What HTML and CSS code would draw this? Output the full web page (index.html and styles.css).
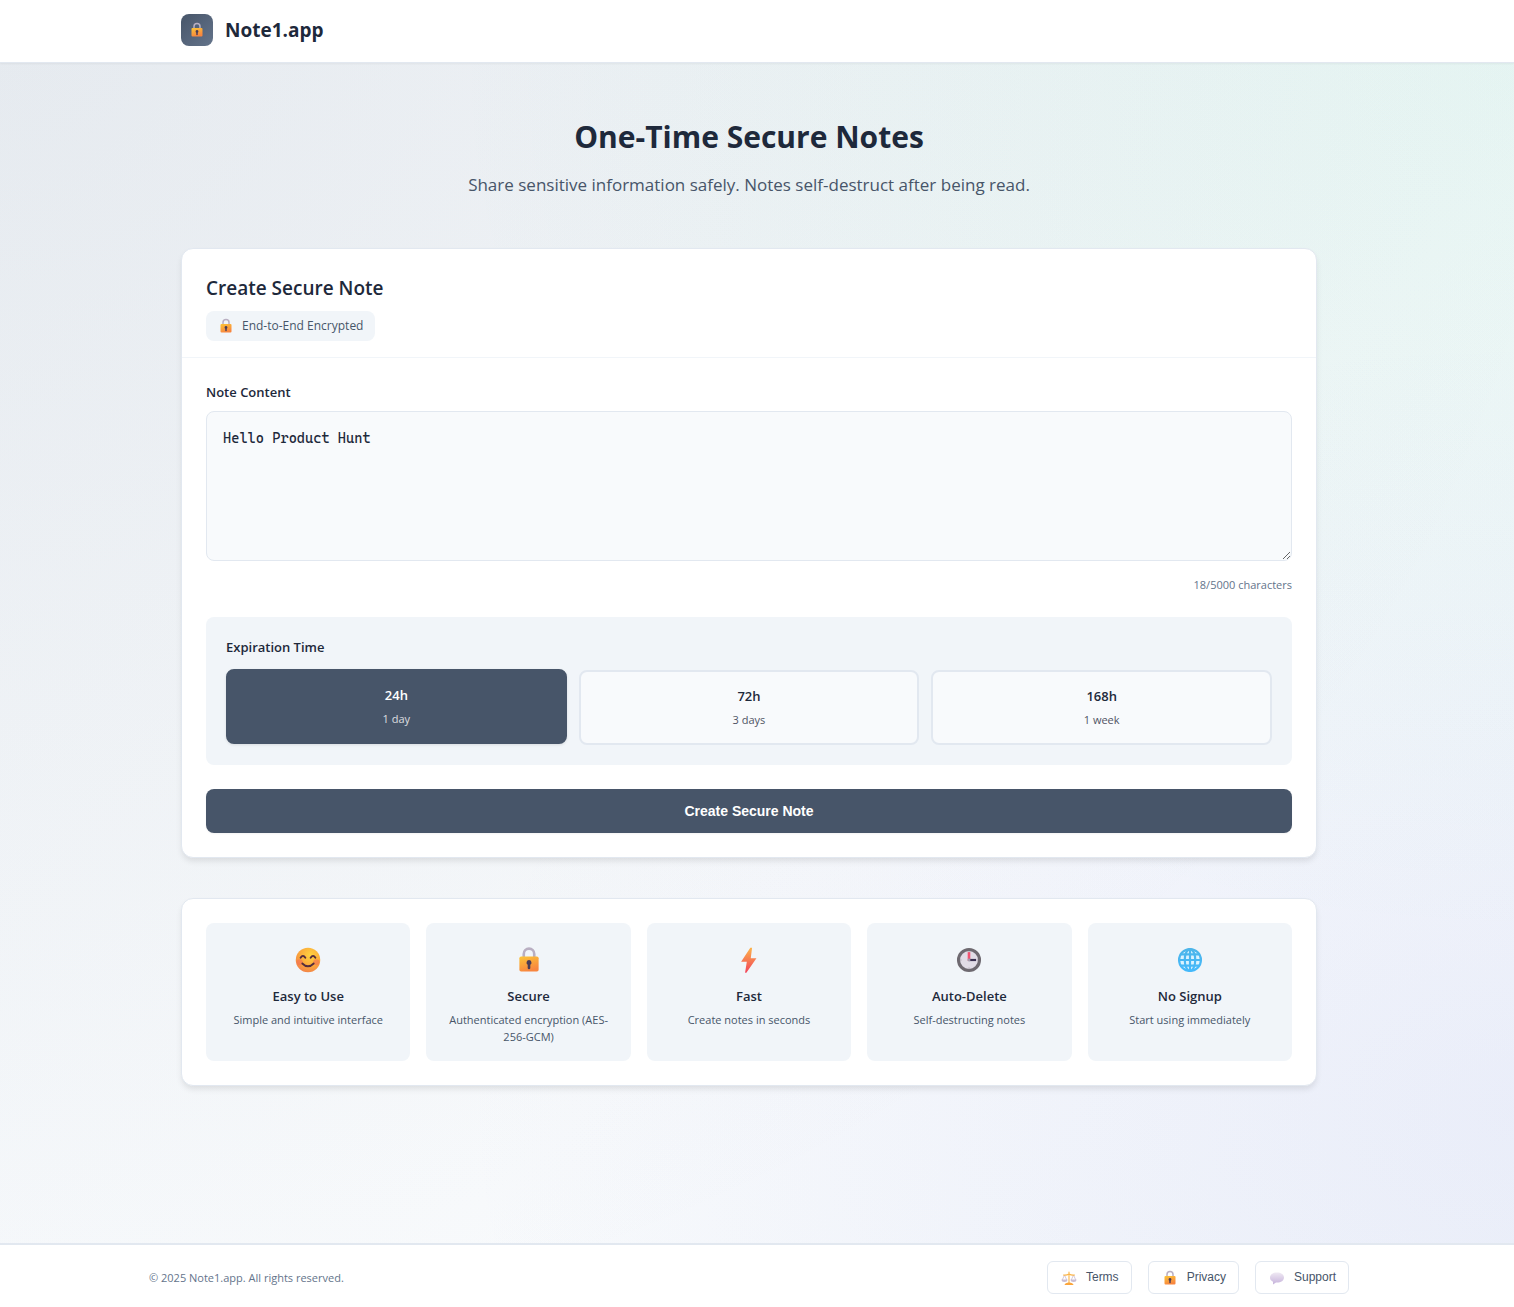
FILE: index.html
```html
<!doctype html>
<html lang="en">
<head>
  <meta charset="utf-8">
  <meta name="viewport" content="width=device-width, initial-scale=1">
  <title>Note1.app</title>
  <link rel="stylesheet" href="styles.css">
</head>
<body>
<!-- shared icons -->
<svg class="icon-defs" aria-hidden="true">
  <defs>
    <linearGradient id="gold" x1="0" y1="0" x2="0.4" y2="1">
      <stop offset="0" stop-color="#fcc537"/>
      <stop offset="1" stop-color="#f8863f"/>
    </linearGradient>
    <radialGradient id="face" cx="0.6" cy="0.3" r="0.8">
      <stop offset="0" stop-color="#ffd340"/>
      <stop offset="0.55" stop-color="#fba93b"/>
      <stop offset="1" stop-color="#f07a4c"/>
    </radialGradient>
    <linearGradient id="flame" x1="0" y1="0" x2="0" y2="1">
      <stop offset="0" stop-color="#fcb44a"/>
      <stop offset="1" stop-color="#f2435a"/>
    </linearGradient>
    <linearGradient id="sky" x1="0" y1="0" x2="0" y2="1">
      <stop offset="0" stop-color="#4db5e9"/>
      <stop offset="1" stop-color="#45b9fb"/>
    </linearGradient>
    <linearGradient id="bubble" x1="0" y1="0" x2="0" y2="1">
      <stop offset="0" stop-color="#efe9f3"/>
      <stop offset="1" stop-color="#c6b2db"/>
    </linearGradient>
  </defs>
  <symbol id="icon-lock" viewBox="0 0 32 32">
    <path d="M10 14V9a6 6 0 0 1 12 0v5" fill="none" stroke="#b9afc2" stroke-width="3"/>
    <rect x="5" y="12" width="22" height="17" rx="2" fill="url(#gold)"/>
    <path d="M16 16a3 3 0 0 0-1.500 5.500v3.500a1.500 1.500 0 0 0 3 0v-3.500A3 3 0 0 0 16 16z" fill="#493b55"/>
  </symbol>
  <symbol id="icon-smile" viewBox="0 0 32 32">
    <circle cx="16" cy="16" r="14" fill="url(#face)"/>
    <circle cx="6.500" cy="18.500" r="3.500" fill="#f36b5a" opacity=".55"/>
    <circle cx="25.500" cy="18.500" r="3.500" fill="#f36b5a" opacity=".55"/>
    <path d="M7.500 13.500q2.700-4.500 5.500 0M19 13.500q2.700-4.500 5.500 0M9.500 20q6.500 6.500 13 0" fill="none" stroke="#542c3d" stroke-width="2.100" stroke-linecap="round"/>
  </symbol>
  <symbol id="icon-bolt" viewBox="0 0 32 32">
    <path d="M17.500 2 7 18h6.500L11.500 30.500h1.500L24.500 14h-6.500L19.500 2z" fill="url(#flame)"/>
  </symbol>
  <symbol id="icon-clock" viewBox="0 0 32 32">
    <circle cx="16" cy="16" r="12" fill="#e1dce6" stroke="#6e6970" stroke-width="3.500"/>
    <path d="M16 5.500v2M16 24.500v2M5.500 16h2M24.500 16h2" stroke="#aaa2b0" stroke-width="1"/>
    <path d="M16 17V7" stroke="#f25371" stroke-width="3"/>
    <path d="M16 16h8" stroke="#3a3050" stroke-width="2.500"/>
    <circle cx="16" cy="16" r="1.700" fill="#a49cad"/>
  </symbol>
  <symbol id="icon-globe" viewBox="0 0 32 32">
    <circle cx="16" cy="16" r="12.500" fill="#dcf3ff"/>
    <g fill="none" stroke="url(#sky)" stroke-width="2.500">
      <circle cx="16" cy="16" r="12.500"/>
      <ellipse cx="16" cy="16" rx="6" ry="12.500"/>
      <path d="M16 3l.01 26M3 16l26 .01M5 9.500l22 .01M5 22.500l22 .01"/>
    </g>
  </symbol>
  <symbol id="icon-scales" viewBox="0 0 32 32">
    <path d="M7 10 2.500 20M7 10l4.500 10M25 10l-4.500 10M25 10l4.500 10" fill="none" stroke="#c5b6cf" stroke-width="1.500"/>
    <path d="M5 10q6 1 11-2 5 3 11 2M16 4v22" fill="none" stroke="#fbb548" stroke-width="2.200" stroke-linecap="round"/>
    <path d="M1 19h12a6 5 0 0 1-12 0zM19 19h12a6 5 0 0 1-12 0z" fill="#c9bdd3"/>
    <path d="M7 30q1-5 9-5t9 5z" fill="#fba53b"/>
  </symbol>
  <symbol id="icon-chat" viewBox="0 0 32 32">
    <path d="M16 5C8 5 2 9 2 15c0 4 2.500 7 6 8.500V29l6-4h2c8 0 14-4 14-10S24 5 16 5z" fill="url(#bubble)"/>
  </symbol>
</svg>

<header class="site-header">
  <div class="header-content">
    <a class="logo" href="/">
      <span class="logo-icon"><svg class="icon-sm" aria-hidden="true"><use href="#icon-lock"/></svg></span>
      <span>Note1.app</span>
    </a>
  </div>
</header>

<main class="main">
  <section class="hero">
    <h1 class="hero-title">One-Time Secure Notes</h1>
    <p class="hero-subtitle">Share sensitive information safely. Notes self-destruct after being read.</p>
  </section>

  <section class="card">
    <div class="card-header">
      <h2 class="card-title">Create Secure Note</h2>
      <div class="badge">
        <svg class="icon-sm" aria-hidden="true"><use href="#icon-lock"/></svg>
        <span>End-to-End Encrypted</span>
      </div>
    </div>
    <form class="card-body">
      <label class="form-label" for="note">Note Content</label>
      <textarea class="note-input" id="note" maxlength="5000" spellcheck="false">Hello Product Hunt</textarea>
      <div class="char-count"><span id="count">18</span>/5000 characters</div>

      <div class="expiration" role="group" aria-labelledby="expiration-label">
        <div class="form-label" id="expiration-label">Expiration Time</div>
        <div class="expiration-options">
          <button class="option active" type="button" aria-pressed="true">
            <span class="option-time">24h</span>
            <span class="option-desc">1 day</span>
          </button>
          <button class="option" type="button" aria-pressed="false">
            <span class="option-time">72h</span>
            <span class="option-desc">3 days</span>
          </button>
          <button class="option" type="button" aria-pressed="false">
            <span class="option-time">168h</span>
            <span class="option-desc">1 week</span>
          </button>
        </div>
      </div>

      <button class="submit" type="button">Create Secure Note</button>
    </form>
  </section>

  <section class="card features">
    <div class="feature">
      <div class="feature-icon"><svg aria-hidden="true"><use href="#icon-smile"/></svg></div>
      <h3 class="feature-title">Easy to Use</h3>
      <p class="feature-text">Simple and intuitive interface</p>
    </div>
    <div class="feature">
      <div class="feature-icon"><svg aria-hidden="true"><use href="#icon-lock"/></svg></div>
      <h3 class="feature-title">Secure</h3>
      <p class="feature-text">Authenticated encryption (AES-256-GCM)</p>
    </div>
    <div class="feature">
      <div class="feature-icon"><svg aria-hidden="true"><use href="#icon-bolt"/></svg></div>
      <h3 class="feature-title">Fast</h3>
      <p class="feature-text">Create notes in seconds</p>
    </div>
    <div class="feature">
      <div class="feature-icon"><svg aria-hidden="true"><use href="#icon-clock"/></svg></div>
      <h3 class="feature-title">Auto-Delete</h3>
      <p class="feature-text">Self-destructing notes</p>
    </div>
    <div class="feature">
      <div class="feature-icon"><svg aria-hidden="true"><use href="#icon-globe"/></svg></div>
      <h3 class="feature-title">No Signup</h3>
      <p class="feature-text">Start using immediately</p>
    </div>
  </section>
</main>

<footer class="site-footer">
  <div class="footer-content">
    <p class="copyright">© 2025 Note1.app. All rights reserved.</p>
    <nav class="footer-links">
      <button class="footer-button" type="button"><svg aria-hidden="true"><use href="#icon-scales"/></svg>Terms</button>
      <button class="footer-button" type="button"><svg aria-hidden="true"><use href="#icon-lock"/></svg>Privacy</button>
      <button class="footer-button" type="button"><svg aria-hidden="true"><use href="#icon-chat"/></svg>Support</button>
    </nav>
  </div>
</footer>

<script>
  var note = document.getElementById('note');
  note.addEventListener('input', function () {
    document.getElementById('count').textContent = note.value.length;
  });

  var options = document.querySelectorAll('.option');
  options.forEach(function (option) {
    option.addEventListener('click', function () {
      options.forEach(function (other) {
        other.classList.toggle('active', other === option);
        other.setAttribute('aria-pressed', other === option);
      });
    });
  });
</script>
</body>
</html>
```

FILE: styles.css
```css
* {
  box-sizing: border-box;
  margin: 0;
  padding: 0;
}
body {
  background:
    radial-gradient(ellipse at 0% 0%, rgba(71, 85, 105, .07) 0%, transparent 75%),
    radial-gradient(ellipse at 100% 5%, rgba(16, 185, 129, .08) 0%, transparent 50%),
    radial-gradient(ellipse at 100% 85%, rgba(99, 102, 241, .06) 0%, transparent 50%),
    linear-gradient(135deg, #f1f5f9 0%, #f8fafc 60%, #f1f5f9 100%);
  color: #1e293b;
  display: flex;
  flex-direction: column;
  font-family: "Segoe UI", "Open Sans", sans-serif;
  min-height: 100vh;
}
.icon-defs {
  height: 0;
  position: absolute;
  width: 0;
}
.icon-sm {
  flex: none;
  height: 16px;
  width: 16px;
}

.site-header,
.main,
.site-footer {
  padding-right: 16px;
}

/* header */
.site-header {
  background: #fff;
  border-bottom: 1px solid #e2e8f0;
  box-shadow: 0 1px 2px rgba(0, 0, 0, .05);
}
.header-content {
  margin: 0 auto;
  max-width: 1200px;
  padding: 14px 32px 16px;
}
.logo {
  align-items: center;
  color: #1e293b;
  display: inline-flex;
  font-size: 19px;
  font-weight: 700;
  gap: 12px;
  line-height: 32px;
  text-decoration: none;
  vertical-align: top;
}
.logo-icon {
  align-items: center;
  background: linear-gradient(135deg, #475569, #64748b);
  border-radius: 8px;
  display: flex;
  height: 32px;
  justify-content: center;
  width: 32px;
}

/* main column */
.main {
  flex: 1;
}
.hero,
.card {
  margin: 0 auto;
  max-width: 1136px;
}
.hero {
  padding: 48px 0;
  text-align: center;
}
.hero-title {
  font-size: 30px;
  font-weight: 700;
  line-height: 51px;
  margin-bottom: 8px;
}
.hero-subtitle {
  color: #475569;
  font-size: 17px;
  line-height: 30px;
}
.card {
  background: #fff;
  border: 1px solid #e2e8f0;
  border-radius: 12px;
  box-shadow: 0 4px 6px -1px rgba(0, 0, 0, .1);
  margin-bottom: 40px;
}
.card-header {
  border-bottom: 1px solid #f1f5f9;
  padding: 24px 24px 16px;
}
.card-title {
  font-size: 19px;
  font-weight: 600;
  line-height: 30px;
  margin-bottom: 8px;
}
.badge {
  align-items: center;
  background: #f1f5f9;
  border-radius: 8px;
  color: #475569;
  display: inline-flex;
  font-size: 12px;
  font-weight: 500;
  gap: 8px;
  line-height: 30px;
  padding: 0 12px;
  vertical-align: top;
}
.card-body {
  padding: 24px;
}
.form-label {
  display: block;
  font-size: 13px;
  font-weight: 600;
  line-height: 21px;
}
.note-input {
  background: #f8fafc;
  border: 1px solid #e2e8f0;
  border-radius: 8px;
  color: #1e293b;
  display: block;
  font-family: "Cascadia Mono", "DejaVu Sans Mono", monospace;
  font-size: 14px;
  height: 150px;
  line-height: 20px;
  margin-top: 8px;
  outline: none;
  padding: 16px;
  resize: vertical;
  width: 100%;
}
.char-count {
  color: #64748b;
  font-size: 11px;
  line-height: 16px;
  margin: 16px 0 24px;
  text-align: right;
}

/* expiration */
.expiration {
  background: #f1f5f9;
  border-radius: 8px;
  margin-bottom: 24px;
  padding: 20px;
}
.expiration-options {
  display: grid;
  gap: 12px;
  grid-template-columns: repeat(3, 1fr);
  margin-top: 12px;
}
.option {
  background: #f8fafc;
  border: 2px solid #e2e8f0;
  border-radius: 8px;
  color: #1e293b;
  cursor: pointer;
  font-family: inherit;
  padding: 12px;
  text-align: center;
}
.option.active {
  background: #475569;
  border-color: #475569;
  box-shadow: 0 1px 3px rgba(0, 0, 0, .1);
  color: #fff;
  transform: translateY(-1px);
}
.option-time,
.option-desc {
  display: block;
}
.option-time {
  font-size: 13px;
  font-weight: 600;
  line-height: 25px;
}
.option-desc {
  font-size: 11px;
  line-height: 22px;
  opacity: .8;
}
.submit {
  background: #475569;
  border: none;
  border-radius: 8px;
  box-shadow: 0 1px 2px rgba(0, 0, 0, .05);
  color: #fff;
  cursor: pointer;
  display: block;
  font: 700 14px/20px Arial, "Liberation Sans", sans-serif;
  padding: 12px;
  width: 100%;
}

/* features */
.features {
  display: grid;
  gap: 16px;
  grid-template-columns: repeat(5, 1fr);
  padding: 24px;
}
.feature {
  background: #f1f5f9;
  border-radius: 8px;
  padding: 16px;
  text-align: center;
}
.feature-icon {
  align-items: center;
  display: flex;
  height: 42px;
  justify-content: center;
  margin-bottom: 4px;
}
.feature-icon svg {
  height: 28px;
  width: 28px;
}
.feature-title {
  font-size: 13px;
  font-weight: 600;
  line-height: 22px;
  margin-bottom: 4px;
}
.feature-text {
  color: #475569;
  font-size: 11px;
  line-height: 17px;
}

/* footer */
.site-footer {
  background: #fff;
  border-top: 2px solid #e2e8f0;
}
.footer-content {
  align-items: center;
  display: flex;
  justify-content: space-between;
  margin: 0 auto;
  max-width: 1200px;
  padding: 16px 0 13px;
}
.copyright {
  color: #64748b;
  font-size: 11px;
}
.footer-links {
  display: flex;
  gap: 16px;
}
.footer-button {
  align-items: center;
  background: #fff;
  border: 1px solid #e2e8f0;
  border-radius: 6px;
  color: #475569;
  cursor: pointer;
  display: flex;
  font: 12px/31px Arial, "Liberation Sans", sans-serif;
  gap: 8px;
  padding: 0 12px;
}
.footer-button svg {
  height: 16px;
  width: 18px;
}

@media (max-width: 800px) {
  .features {
    grid-template-columns: repeat(2, 1fr);
  }
}
```
